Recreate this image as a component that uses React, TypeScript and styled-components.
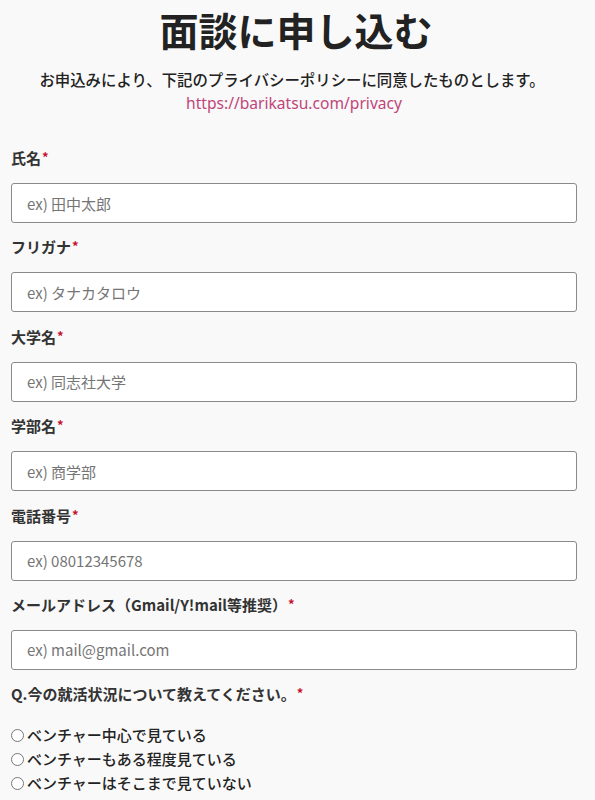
import React, { FC } from 'react';
import styled, { createGlobalStyle } from 'styled-components';

const GlobalStyle = createGlobalStyle`
    body {
        margin: 0;
        background: #f9f9f9;
        font-family: "Noto Sans CJK JP", "Noto Sans", sans-serif;
        color: #333;
    }
`

const Page = styled.div`
    padding: 2px 18px 0 11px;
`

const Header = styled.header`
    display: flex;
    flex-direction: column;
    align-items: center;
    text-align: center;
`

const Title = styled.h1`
    margin: 0;
    font-size: 39px;
    line-height: 54px;
    font-weight: 700;
    color: #222;
    padding-left: 4px;
`

const Note = styled.p`
    margin: 12px 0 0;
    font-size: 15.4px;
    line-height: 22px;
    font-weight: 500;
    color: #222;
    padding-right: 4px;
`

const PolicyLink = styled.a`
    margin-top: 2px;
    font-family: "Noto Sans", sans-serif;
    font-size: 15.6px;
    line-height: 22px;
    color: #c0457a;
    text-decoration: none;
`

const Form = styled.form`
    margin-top: 34px;
    display: flex;
    flex-direction: column;
`

const Field = styled.div`
    display: flex;
    flex-direction: column;
    margin-bottom: 14.4px;
`

const Label = styled.label`
    font-size: 15px;
    line-height: 20px;
    font-weight: 700;
    color: #333;
    margin-bottom: 15px;
`

const Required = styled.span`
    color: #c8102e;
    font-size: 13px;
    vertical-align: top;
    line-height: 18px;
    margin-left: 1px;
`

const TextInput = styled.input`
    box-sizing: border-box;
    width: 100%;
    height: 40px;
    padding: 0 15px;
    background: #fff;
    border: 1px solid #8a8a8a;
    border-radius: 3px;
    font-family: "Noto Sans CJK JP", "Noto Sans", sans-serif;
    font-size: 15px;
    color: #333;

    ::placeholder {
        color: #8c8c8c;
    }
`

const RadioGroup = styled.div`
    display: flex;
    flex-direction: column;
    margin-top: 4px;
`

const RadioRow = styled.label`
    display: flex;
    align-items: center;
    gap: 3px;
    height: 24px;
    font-size: 15px;
    line-height: 24px;
    font-weight: 500;
    color: #222;
`

const Radio = styled.input`
    appearance: none;
    margin: 0;
    width: 13px;
    height: 13px;
    border: 1px solid #777;
    border-radius: 50%;
    background: #fff;
`

const fields = [
    { label: '氏名', placeholder: 'ex) 田中太郎' },
    { label: 'フリガナ', placeholder: 'ex) タナカタロウ' },
    { label: '大学名', placeholder: 'ex) 同志社大学' },
    { label: '学部名', placeholder: 'ex) 商学部' },
    { label: '電話番号', placeholder: 'ex) 08012345678' },
    { label: 'メールアドレス（Gmail/Y!mail等推奨）', placeholder: 'ex) mail@gmail.com' },
]

const options = [
    'ベンチャー中心で見ている',
    'ベンチャーもある程度見ている',
    'ベンチャーはそこまで見ていない',
]

const App: FC = () => {
    return (
        <Page>
            <GlobalStyle />
            <Header>
                <Title>面談に申し込む</Title>
                <Note>お申込みにより、下記のプライバシーポリシーに同意したものとします。</Note>
                <PolicyLink href="#">https://barikatsu.com/privacy</PolicyLink>
            </Header>
            <Form>
                {fields.map((f) => (
                    <Field key={f.label}>
                        <Label>
                            {f.label}
                            <Required>*</Required>
                        </Label>
                        <TextInput placeholder={f.placeholder} />
                    </Field>
                ))}
                <Field>
                    <Label>
                        Q.今の就活状況について教えてください。
                        <Required>*</Required>
                    </Label>
                    <RadioGroup>
                        {options.map((o) => (
                            <RadioRow key={o}>
                                <Radio type="radio" name="status" />
                                {o}
                            </RadioRow>
                        ))}
                    </RadioGroup>
                </Field>
            </Form>
        </Page>
    )
}

export default App
